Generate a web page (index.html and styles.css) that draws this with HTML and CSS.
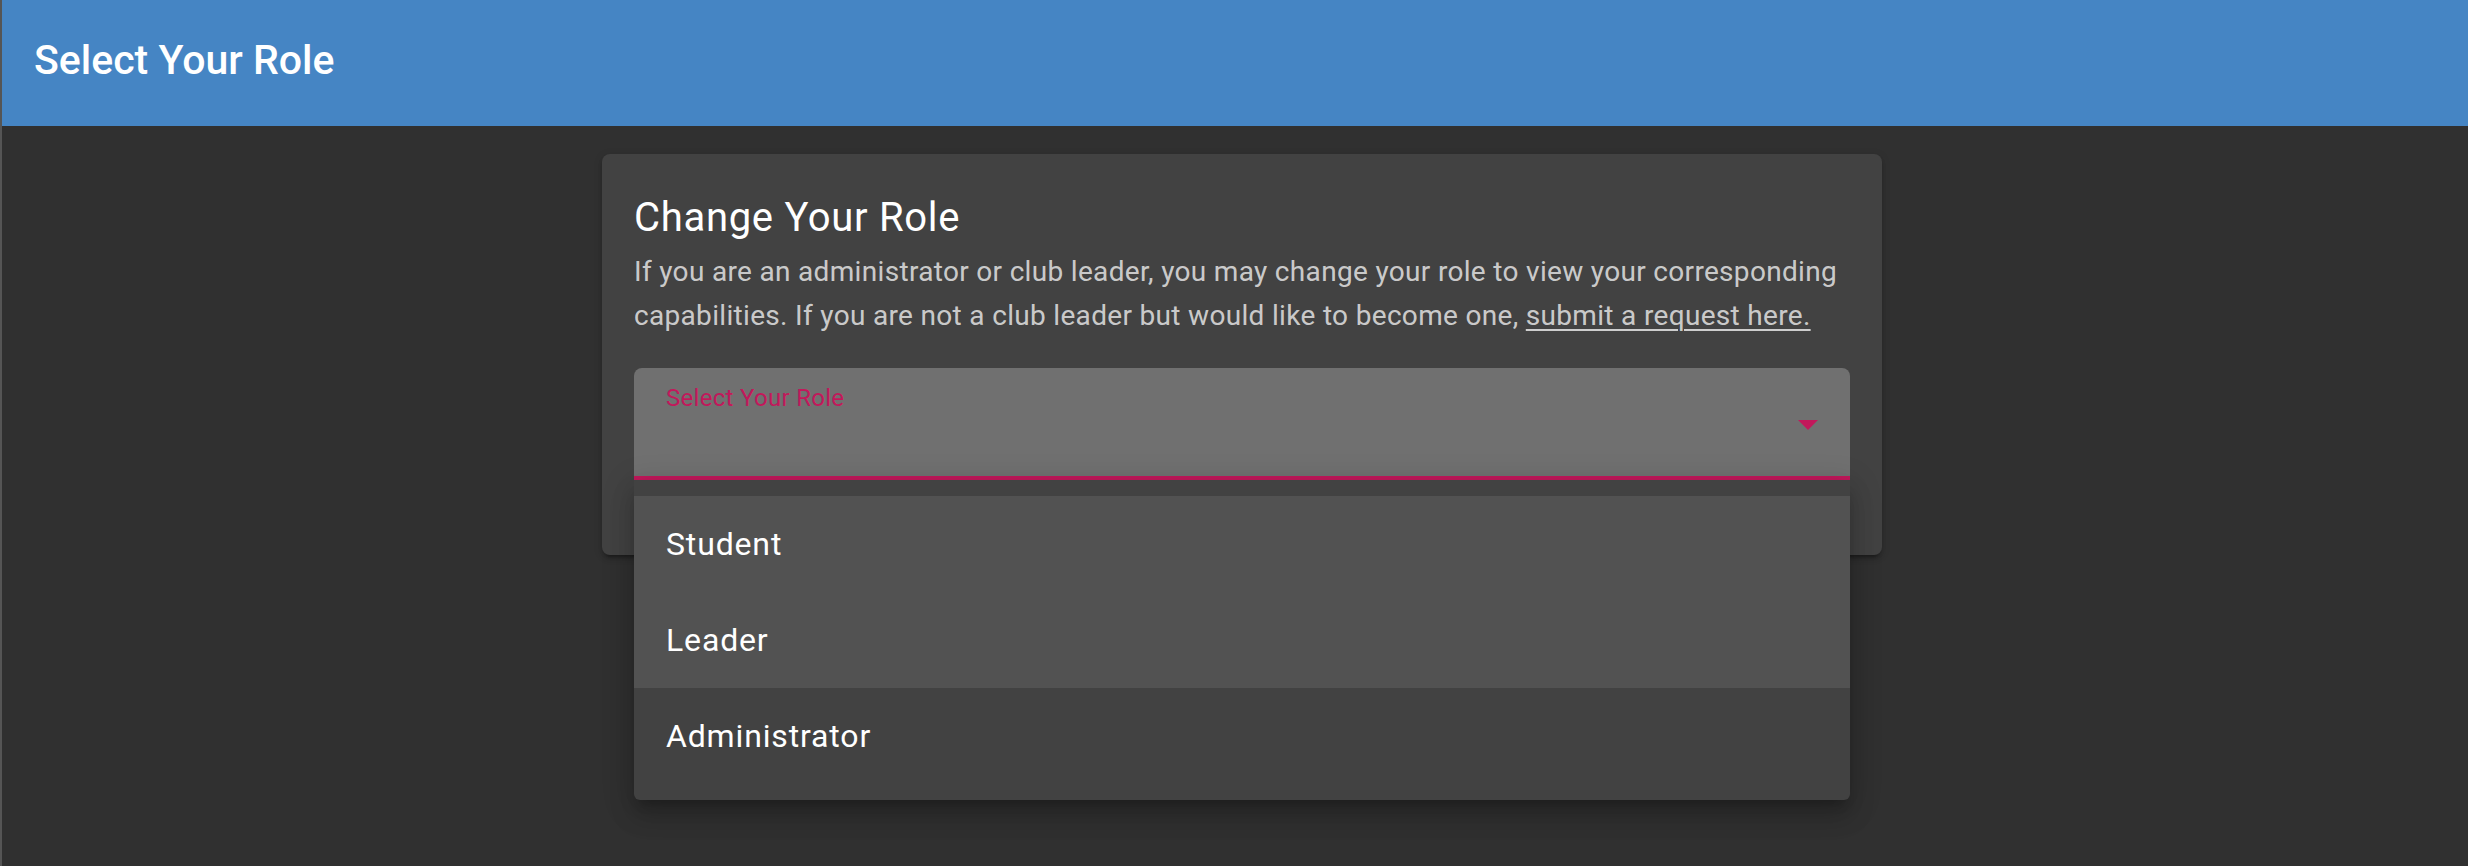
FILE: index.html
```html
<!DOCTYPE html>
<html lang="en">
<head>
<meta charset="utf-8">
<title>Select Your Role</title>
<link rel="stylesheet" href="styles.css">
</head>
<body>
<header class="app-bar">
  <h1 class="app-title">Select Your Role</h1>
</header>
<main class="main">
  <section class="card">
    <h2 class="card-title">Change Your Role</h2>
    <p class="card-text">If you are an administrator or club leader, you may change your role to view your corresponding capabilities. If you are not a club leader but would like to become one, <a class="link" href="#">submit a request here.</a></p>
    <div class="select">
      <div class="field">
        <span class="field-label">Select Your Role</span>
        <svg class="field-arrow" width="20" height="10" viewBox="0 0 20 10"><path d="M0 0 L20 0 L10 10 Z" fill="#c2185b"/></svg>
      </div>
      <ul class="menu">
        <li class="menu-item active">Student</li>
        <li class="menu-item active">Leader</li>
        <li class="menu-item">Administrator</li>
      </ul>
    </div>
  </section>
</main>
</body>
</html>
```

FILE: styles.css
```css
* { box-sizing: border-box; }
html, body { margin: 0; padding: 0; }
body {
  background: #303030;
  border-left: 2px solid #555555;
  width: 2468px;
  height: 866px;
  overflow: hidden;
  font-family: Roboto, "Liberation Sans", sans-serif;
  color: #ffffff;
}
.app-bar {
  height: 126px;
  background: #4585c4;
  display: flex;
  align-items: center;
  padding: 0 0 6px 32px;
}
.app-title {
  margin: 0;
  font-size: 41px;
  font-weight: 500;
  letter-spacing: 0;
  line-height: 1;
}
.main {
  display: flex;
  justify-content: center;
  padding: 28px 0 0 14px;
}
.card {
  width: 1280px;
  background: #424242;
  border-radius: 8px;
  padding: 32px 32px 75px;
  box-shadow: 0 6px 2px -4px rgba(0,0,0,0.2), 0 4px 4px 0 rgba(0,0,0,0.14), 0 2px 10px 0 rgba(0,0,0,0.12);
}
.card-title {
  margin: 0;
  font-size: 40px;
  font-weight: 400;
  line-height: 64px;
  letter-spacing: 0.7px;
}
.card-text {
  margin: 0;
  font-size: 28px;
  line-height: 44px;
  letter-spacing: 0.32px;
  color: rgba(255,255,255,0.74);
}
.link { color: inherit; text-decoration: underline; text-underline-offset: 4px; text-decoration-thickness: 2px; }
.select {
  position: relative;
  margin-top: 30px;
}
.field {
  height: 112px;
  background: #707070;
  border-radius: 8px 8px 0 0;
  border-bottom: 4px solid #c2185b;
  display: flex;
  justify-content: space-between;
  align-items: center;
  padding: 0 32px;
}
.field-label {
  align-self: flex-start;
  margin-top: 18px;
  font-size: 24px;
  line-height: 24px;
  letter-spacing: 0.3px;
  color: #c2185b;
}
.field-arrow { margin-top: 6px; display: block; }
.menu {
  position: absolute;
  top: 112px;
  left: 0;
  right: 0;
  margin: 0;
  padding: 16px 0;
  list-style: none;
  background: #424242;
  border-radius: 0 0 6px 6px;
  box-shadow: 0 10px 10px -6px rgba(0,0,0,0.2), 0 16px 24px 2px rgba(0,0,0,0.14), 0 6px 30px 5px rgba(0,0,0,0.12);
}
.menu-item {
  height: 96px;
  display: flex;
  align-items: center;
  padding: 0 32px;
  font-size: 32px;
  letter-spacing: 0.85px;
  color: #ffffff;
}
.menu-item.active { background: #525252; }
```
